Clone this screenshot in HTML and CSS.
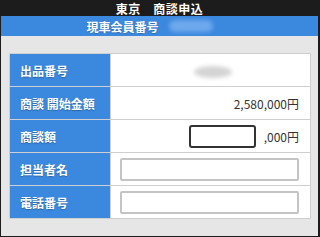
FILE: index.html
```html
<!DOCTYPE html>
<html lang="ja">
<head>
    <meta charset="UTF-8">
    <meta name="viewport" content="width=device-width, initial-scale=1.0">
    <title>東京 商談申込</title>
    <link rel="stylesheet" href="styles.css">
</head>
<body>
    <div class="frame">
        <div class="title-bar">東京　商談申込</div>
        <div class="member-bar">
            <span>現車会員番号</span>
            <span class="masked masked-blue"></span>
        </div>

        <div class="content">
            <table class="form-table">
                <tr>
                    <th>出品番号</th>
                    <td class="center"><span class="masked masked-gray"></span></td>
                </tr>
                <tr>
                    <th>商談 開始金額</th>
                    <td class="right">2,580,000円</td>
                </tr>
                <tr>
                    <th>商談額</th>
                    <td class="right">
                        <div class="amount">
                            <input type="text" class="amount-input">
                            <span>,000円</span>
                        </div>
                    </td>
                </tr>
                <tr>
                    <th>担当者名</th>
                    <td><input type="text" class="text-input"></td>
                </tr>
                <tr>
                    <th>電話番号</th>
                    <td><input type="tel" class="text-input"></td>
                </tr>
            </table>
        </div>
    </div>
</body>
</html>
```

FILE: styles.css
```css
:root {
    --blue: #3b88df;
    --dark: #1c1c1c;
    --bg: #e6e6e6;
    --line: #cfcfcf;
    --text: #333;
}

* {
    margin: 0;
    padding: 0;
    box-sizing: border-box;
}

body {
    font-family: 'Noto Sans CJK JP', 'Liberation Sans', sans-serif;
    color: var(--text);
    background: var(--bg);
}

.frame {
    width: 320px;
    height: 237px;
    background: var(--bg);
    border-left: 1px solid var(--dark);
    border-right: 2px solid var(--dark);
    border-bottom: 1px solid var(--dark);
}

.title-bar {
    height: 16px;
    background: var(--dark);
    color: white;
    font-size: 12px;
    font-weight: bold;
    line-height: 17px;
    text-align: center;
    letter-spacing: 0.5px;
}

.member-bar {
    height: 20px;
    background: var(--blue);
    color: white;
    font-size: 12px;
    font-weight: bold;
    display: flex;
    align-items: center;
    justify-content: center;
    gap: 10px;
    padding-right: 20px;
    text-shadow: 0 1px 1px rgba(0, 0, 0, 0.2);
}

.masked {
    display: inline-block;
    border-radius: 6px;
    filter: blur(2px);
}

.masked-blue {
    width: 44px;
    height: 12px;
    background: #6ea8ec;
}

.masked-gray {
    width: 38px;
    height: 12px;
    border-radius: 50%;
    background: #d4d4d4;
    margin-left: 6px;
    vertical-align: middle;
}

.content {
    padding: 17px 7px 0 8px;
}

.form-table {
    width: 302px;
    border-collapse: collapse;
    background: white;
    font-size: 12px;
}

.form-table th,
.form-table td {
    height: 33px;
    border: 1px solid var(--line);
}

.form-table th {
    width: 101px;
    background: var(--blue);
    color: white;
    text-align: left;
    padding-left: 10px;
    font-weight: bold;
    text-shadow: 0 1px 1px rgba(0, 0, 0, 0.25);
    white-space: nowrap;
}

.form-table td {
    padding: 0 11px 0 9px;
}

.center {
    text-align: center;
}

.right {
    text-align: right;
}

.amount {
    display: flex;
    align-items: center;
    justify-content: flex-end;
    gap: 8px;
}

.amount-input {
    width: 67px;
    height: 23px;
    border: 2px solid #333;
    border-radius: 3px;
    background: white;
}

.text-input {
    display: block;
    width: 100%;
    height: 23px;
    border: 2px solid #c4c4c4;
    border-radius: 2px;
    background: white;
}
```
